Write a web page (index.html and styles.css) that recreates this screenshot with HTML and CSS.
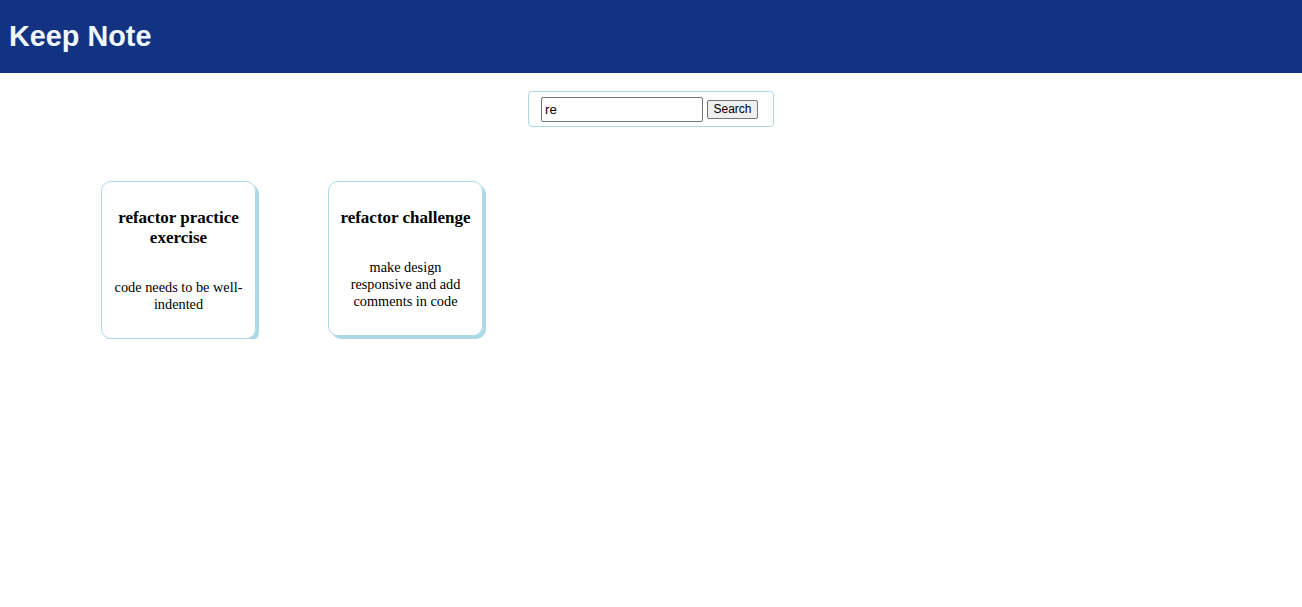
FILE: index.html
```html
<!DOCTYPE html>
<html>
<head>
<meta charset="utf-8">
<title>Keep Note</title>
<link rel="stylesheet" href="styles.css">
</head>
<body>
<header class="app-header">
  <h1 class="app-title">Keep Note</h1>
</header>
<main class="content">
  <div class="search-row">
    <form class="search-box">
      <input class="search-input" type="text" value="re">
      <button class="search-btn" type="button">Search</button>
    </form>
  </div>
  <section class="notes">
    <article class="note-card">
      <h3 class="note-title">refactor practice exercise</h3>
      <p class="note-text">code needs to be well-indented</p>
    </article>
    <article class="note-card">
      <h3 class="note-title">refactor challenge</h3>
      <p class="note-text">make design responsive and add comments in code</p>
    </article>
  </section>
</main>
</body>
</html>
```
FILE: styles.css
```css
html, body {
  margin: 0;
  padding: 0;
  background: #ffffff;
}
body {
  font-family: "Liberation Serif", "Times New Roman", serif;
}
.app-header {
  background: #133382;
  height: 73px;
  display: flex;
  align-items: center;
  padding-left: 9px;
}
.app-title {
  margin: 0;
  font-family: "Liberation Sans", Arial, sans-serif;
  font-weight: bold;
  font-size: 28.8px;
  color: #f0f8ff;
}
.search-row {
  display: flex;
  justify-content: center;
  margin-top: 18px;
}
.search-box {
  display: flex;
  align-items: center;
  gap: 4px;
  width: 246px;
  height: 36px;
  box-sizing: border-box;
  border: 1px solid #add8e6;
  border-radius: 4px;
  padding: 0 15px 0 12px;
  margin: 0;
}
.search-input {
  width: 162px;
  height: 25px;
  box-sizing: border-box;
  border: 1px solid #767676;
  border-radius: 2px;
  padding: 0 3px;
  margin: 0;
  font-family: "Liberation Sans", Arial, sans-serif;
  font-size: 13.33px;
  color: #000;
}
.search-btn {
  width: 52px;
  height: 19px;
  box-sizing: border-box;
  border: 1px solid #767676;
  border-radius: 2px;
  background: #efefef;
  padding: 0;
  margin: 0;
  font-family: "Liberation Sans", Arial, sans-serif;
  font-size: 12px;
  color: #000;
}
.notes {
  display: flex;
  align-items: flex-start;
  gap: 72px;
  padding-left: 101px;
  margin-top: 54px;
}
.note-card {
  width: 155px;
  box-sizing: border-box;
  border: 1px solid #add8e6;
  border-radius: 10px;
  box-shadow: 3px 3px 0 #add8e6;
  padding: 0 11px;
  text-align: center;
}
.note-title {
  font-size: 17px;
  line-height: 20px;
  font-weight: bold;
  margin: 26px 0 31px;
}
.note-text {
  font-size: 14.3px;
  line-height: 17px;
  margin: 0 0 25px;
}
```
